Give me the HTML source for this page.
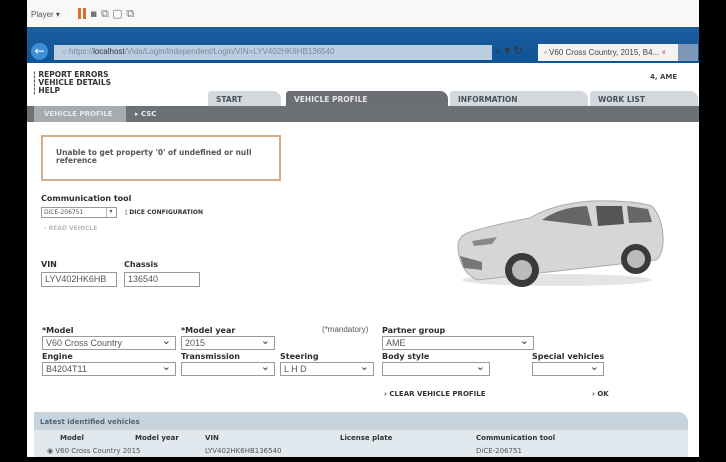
<!DOCTYPE html>
<html><head><style>
*{margin:0;padding:0;box-sizing:border-box}
body{width:726px;height:462px;background:#000;position:relative;overflow:hidden;font-family:"DejaVu Sans","Liberation Sans",sans-serif;font-size:8px;color:#333}
.a{position:absolute}
.b{font-weight:bold}
.lbl{position:absolute;font-weight:bold;font-size:8px;color:#2c2c2c}
.sel{position:absolute;height:14px;border:1px solid #9a9a9a;background:#fff;font-family:"Liberation Sans",sans-serif;font-size:9px;color:#555;padding:1px 3px}
.sel:after{content:"⌄";position:absolute;right:4px;top:-3px;font-size:11px;color:#333}
.tab{position:absolute;top:91px;height:15px;background:#d3d8dd;font-weight:bold;font-size:7.5px;color:#44505a;padding:4px 8px;border-radius:3px 8px 0 0}
</style></head><body>
<div class="a" style="left:27px;top:0;width:672px;height:457px;background:#fff"></div>
<div class="a" style="left:27px;top:0;width:672px;height:27px;background:#f8f8f7"></div>
<div class="a" style="left:31px;top:10px;font-size:8px;color:#555;font-family:'Liberation Sans'">Player ▾</div>
<div class="a" style="left:78px;top:8px;width:3px;height:11px;background:#e06a2a"></div>
<div class="a" style="left:83px;top:8px;width:3px;height:11px;background:#e06a2a"></div>
<div class="a" style="left:90px;top:7px;font-size:11px;color:#777">▪ ⧉ ▢ ⧉</div>
<div class="a" style="left:27px;top:27px;width:672px;height:36px;background:linear-gradient(#1c5ea0,#0f5496)"></div>
<div class="a" style="left:31px;top:43px;width:17px;height:17px;border-radius:50%;background:#3a8fd6;color:#fff;font-size:12px;text-align:center;line-height:16px">←</div>
<div class="a" style="left:54px;top:45px;width:438px;height:15px;background:#bccde0;font-family:'Liberation Sans';font-size:8px;color:#7a8a9a;padding:2px 8px">○ https://<span style="color:#333">localhost</span>/Vida/Login/Independent/Login/VIN=LYV402HK6HB136540</div>
<div class="a" style="left:495px;top:44px;font-size:11px;color:#333">⌕ ▾ ↻</div>
<div class="a" style="left:538px;top:44px;width:152px;height:17px;background:#f3f3f3;font-family:'Liberation Sans';font-size:8px;color:#444;padding:4px 6px">◦ V60 Cross Country, 2015, B4... <span style="color:#c44">×</span></div>
<div class="a" style="left:678px;top:44px;width:20px;height:17px;background:#7d99b7"></div>
<div class="a b" style="left:33px;top:71px;font-size:7.5px;line-height:8px;color:#333">¦ REPORT ERRORS<br>¦ VEHICLE DETAILS<br>¦ HELP</div>
<div class="a b" style="left:650px;top:73px;font-size:7px;color:#444">4, AME</div>
<div class="tab" style="left:208px;width:73px">START</div>
<div class="tab" style="left:286px;width:162px;background:#6b6e73;color:#e5e5e5">VEHICLE PROFILE</div>
<div class="tab" style="left:450px;width:138px">INFORMATION</div>
<div class="tab" style="left:590px;width:108px">WORK LIST</div>
<div class="a" style="left:27px;top:106px;width:672px;height:16px;background:#6d7075"></div>
<div class="a b" style="left:34px;top:106px;width:92px;height:16px;background:#a7abb0;color:#e8e8e8;font-size:7px;padding:4px 10px">VEHICLE PROFILE</div>
<div class="a b" style="left:135px;top:110px;color:#eee;font-size:7px">▸ CSC</div>
<div class="a" style="left:41px;top:135px;width:240px;height:46px;border:2px solid #d7ad8a;padding:12px 13px;font-weight:bold;font-size:7.5px;line-height:8px;color:#555">Unable to get property '0' of undefined or null reference</div>
<div class="lbl" style="left:41px;top:194px">Communication tool</div>
<div class="a" style="left:41px;top:207px;width:76px;height:11px;border:1px solid #999;font-size:6px;color:#555;padding:1px 2px">DiCE-206751<span style="position:absolute;right:1px;top:0;width:9px;height:9px;border-left:1px solid #bbb;font-size:6px;text-align:center">▾</span></div>
<div class="a b" style="left:125px;top:209px;font-size:6px;color:#333">¦ DICE CONFIGURATION</div>
<div class="a b" style="left:44px;top:225px;font-size:6px;color:#bbb">› READ VEHICLE</div>
<div class="lbl" style="left:41px;top:260px">VIN</div>
<div class="lbl" style="left:124px;top:260px">Chassis</div>
<div class="a" style="left:41px;top:272px;width:76px;height:15px;border:1px solid #999;font-family:'Liberation Sans';font-size:9px;color:#555;padding:1px 3px">LYV402HK6HB</div>
<div class="a" style="left:124px;top:272px;width:76px;height:15px;border:1px solid #999;font-family:'Liberation Sans';font-size:9px;color:#555;padding:1px 3px">136540</div>
<svg class="a" style="left:452px;top:196px" width="216" height="95" viewBox="0 0 216 95">
<ellipse cx="105" cy="84" rx="95" ry="6" fill="#e4e4e4"/>
<path d="M6 52 Q5 40 18 36 Q45 28 78 22 Q100 8 140 5 Q180 4 200 10 Q210 22 211 40 Q212 58 204 64 L25 84 Q8 76 6 52Z" fill="#d6d6d6" stroke="#aaa"/>
<path d="M90 24 Q108 11 135 10 L140 30Z" fill="#666"/>
<path d="M144 10 L170 10 L172 28 L146 30Z" fill="#555"/>
<path d="M175 10 L196 13 L200 26 L177 27Z" fill="#666"/>
<path d="M8 60 L30 66 L30 74 L12 72Z" fill="#777"/>
<path d="M20 45 L45 41 L40 48 L22 50Z" fill="#888"/>
<circle cx="70" cy="74" r="17" fill="#3a3a3a"/><circle cx="70" cy="74" r="10" fill="#bbb"/>
<circle cx="184" cy="63" r="15" fill="#3a3a3a"/><circle cx="184" cy="63" r="9" fill="#bbb"/>
</svg>
<div class="lbl" style="left:42px;top:326px">*Model</div>
<div class="lbl" style="left:181px;top:326px">*Model year</div>
<div class="a" style="left:322px;top:325px;font-family:'Liberation Sans';font-size:8px;color:#555">(*mandatory)</div>
<div class="lbl" style="left:382px;top:326px">Partner group</div>
<div class="sel" style="left:42px;top:336px;width:134px">V60 Cross Country</div>
<div class="sel" style="left:181px;top:336px;width:94px">2015</div>
<div class="sel" style="left:382px;top:336px;width:152px">AME</div>
<div class="lbl" style="left:42px;top:352px">Engine</div>
<div class="lbl" style="left:181px;top:352px">Transmission</div>
<div class="lbl" style="left:280px;top:352px">Steering</div>
<div class="lbl" style="left:382px;top:352px">Body style</div>
<div class="lbl" style="left:532px;top:352px">Special vehicles</div>
<div class="sel" style="left:42px;top:362px;width:134px">B4204T11</div>
<div class="sel" style="left:181px;top:362px;width:94px"></div>
<div class="sel" style="left:280px;top:362px;width:94px">L H D</div>
<div class="sel" style="left:382px;top:362px;width:108px"></div>
<div class="sel" style="left:532px;top:362px;width:72px"></div>
<div class="a b" style="left:384px;top:390px;font-size:7px;color:#333">› CLEAR VEHICLE PROFILE</div>
<div class="a b" style="left:592px;top:390px;font-size:7px;color:#333">› OK</div>
<div class="a" style="left:34px;top:412px;width:654px;height:45px;background:#c8d4dd;border-radius:0 10px 0 0"></div>
<div class="a b" style="left:40px;top:418px;font-size:7px;color:#4f6272">Latest identified vehicles</div>
<div class="a" style="left:34px;top:430px;width:654px;height:27px;background:#e1e8ee"></div>
<div class="a b" style="left:60px;top:434px;font-size:7px;color:#333">Model</div>
<div class="a b" style="left:135px;top:434px;font-size:7px;color:#333">Model year</div>
<div class="a b" style="left:205px;top:434px;font-size:7px;color:#333">VIN</div>
<div class="a b" style="left:340px;top:434px;font-size:7px;color:#333">License plate</div>
<div class="a b" style="left:476px;top:434px;font-size:7px;color:#333">Communication tool</div>
<div class="a" style="left:47px;top:447px;font-size:7px;color:#555">◉ V60 Cross Country 2015</div>
<div class="a" style="left:205px;top:447px;font-size:7px;color:#555">LYV402HK6HB136540</div>
<div class="a" style="left:476px;top:447px;font-size:7px;color:#555">DiCE-206751</div>
</body></html>
